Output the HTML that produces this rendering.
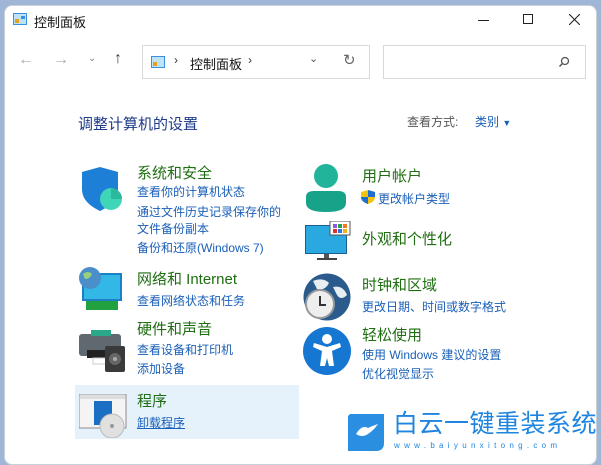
<!DOCTYPE html>
<html><head><meta charset="utf-8"><style>
*{margin:0;padding:0;box-sizing:border-box}
body{width:601px;height:457px;overflow:hidden;background:#9fb6d6;font-family:"Liberation Sans","Noto Sans CJK SC",sans-serif;position:relative}
.win{position:absolute;left:4px;top:5px;width:593px;height:460px;background:#fff;border-radius:8px;border:1px solid #c8d0da}
.a{position:absolute;white-space:nowrap}
.h{font-size:15px;color:#1f6e12}
.l{font-size:12px;color:#1a5fb8}
.box{position:absolute;border:1px solid #d9d9d9;background:#fff}
</style></head><body>
<div class="win"></div>
<!-- title -->
<svg class="a" style="left:13px;top:13px" width="14" height="12"><rect x="0" y="0" width="14" height="12" fill="#3b8ee0"/><rect x="1" y="1" width="12" height="10" fill="#bfe3f6"/><rect x="2" y="6" width="4" height="4" fill="#e6a020"/><rect x="8" y="3" width="4" height="3" fill="#3b8ee0"/></svg>
<div class="a" style="left:34px;top:12px;font-size:13px;color:#111">控制面板</div>
<div class="a" style="left:478px;top:20px;width:11px;height:1px;background:#222"></div>
<div class="a" style="left:523px;top:14px;width:10px;height:10px;border:1px solid #222"></div>
<svg class="a" style="left:569px;top:14px" width="11" height="11"><path d="M0 0L11 11M11 0L0 11" stroke="#222" stroke-width="1.1"/></svg>
<!-- nav -->
<div class="a" style="left:18px;top:51px;font-size:16px;color:#aaa">←</div>
<div class="a" style="left:53px;top:51px;font-size:16px;color:#aaa">→</div>
<div class="a" style="left:88px;top:53px;font-size:10px;color:#888">⌄</div>
<div class="a" style="left:114px;top:50px;font-size:16px;color:#444">↑</div>
<div class="box" style="left:142px;top:45px;width:228px;height:34px"></div>
<svg class="a" style="left:151px;top:56px" width="14" height="12"><rect width="14" height="12" fill="#3b8ee0"/><rect x="1" y="1" width="12" height="10" fill="#bfe3f6"/><rect x="2" y="6" width="4" height="4" fill="#e6a020"/></svg>
<div class="a" style="left:174px;top:53px;font-size:12px;color:#333">›</div>
<div class="a" style="left:190px;top:54px;font-size:13px;color:#111">控制面板</div>
<div class="a" style="left:248px;top:53px;font-size:12px;color:#333">›</div>
<div class="a" style="left:309px;top:52px;font-size:11px;color:#555">⌄</div>
<div class="a" style="left:343px;top:51px;font-size:15px;color:#666">↻</div>
<div class="box" style="left:383px;top:45px;width:203px;height:34px"></div>
<svg class="a" style="left:558px;top:56px" width="12" height="12"><circle cx="7" cy="5" r="3.5" fill="none" stroke="#555" stroke-width="1.3"/><line x1="4.5" y1="7.5" x2="1.5" y2="10.5" stroke="#555" stroke-width="1.5"/></svg>
<div class="a" style="left:78px;top:113px;font-size:15px;color:#1e3a8a">调整计算机的设置</div>
<div class="a" style="left:407px;top:113px;font-size:12px;color:#555">查看方式:</div>
<div class="a" style="left:475px;top:113px;font-size:12px;color:#1a5fb8">类别 <span style="font-size:9px">▼</span></div>
<!-- left column -->
<svg class="a" style="left:80px;top:167px" width="45" height="45"><path d="M2 5 L20 0 L38 5 L38 22 C38 34 28 40 20 44 C12 40 2 34 2 22Z" fill="#1e7fd6"/><circle cx="31" cy="32" r="11" fill="#3fd6b8"/><path d="M31 21 A11 11 0 0 1 42 32 L31 32Z" fill="#2bb99e"/></svg>
<div class="a h" style="left:137px;top:162px">系统和安全</div>
<div class="a l" style="left:137px;top:183px">查看你的计算机状态</div>
<div class="a l" style="left:137px;top:203px">通过文件历史记录保存你的</div>
<div class="a l" style="left:137px;top:220px">文件备份副本</div>
<div class="a l" style="left:137px;top:239px">备份和还原(Windows 7)</div>
<svg class="a" style="left:78px;top:267px" width="47" height="47"><rect x="4" y="6" width="40" height="28" fill="#1d7fc4"/><rect x="6" y="8" width="36" height="24" fill="#33b7e6"/><rect x="8" y="34" width="32" height="9" fill="#21a140"/><circle cx="12" cy="11" r="11" fill="#4a8fc9"/><path d="M5 7 Q10 3 14 7 Q12 12 7 12Z" fill="#9ad07c"/></svg>
<div class="a h" style="left:137px;top:268px">网络和 Internet</div>
<div class="a l" style="left:137px;top:292px">查看网络状态和任务</div>
<svg class="a" style="left:79px;top:330px" width="48" height="42"><rect x="0" y="4" width="42" height="22" rx="3" fill="#606870"/><rect x="12" y="0" width="20" height="6" fill="#2aa889"/><rect x="8" y="20" width="26" height="8" fill="#222"/><rect x="14" y="28" width="22" height="6" fill="#fff" stroke="#ccc"/><rect x="26" y="16" width="20" height="26" rx="2" fill="#3a3a3a"/><circle cx="36" cy="29" r="6" fill="#666"/><circle cx="36" cy="29" r="2" fill="#aaa"/></svg>
<div class="a h" style="left:137px;top:318px">硬件和声音</div>
<div class="a l" style="left:137px;top:341px">查看设备和打印机</div>
<div class="a l" style="left:137px;top:360px">添加设备</div>
<div class="a" style="left:75px;top:385px;width:224px;height:54px;background:#e5f1fb"></div>
<svg class="a" style="left:79px;top:394px" width="48" height="44"><rect x="0" y="0" width="47" height="34" fill="#f4f4f4" stroke="#8b8b8b"/><rect x="1" y="1" width="45" height="4" fill="#ddd"/><rect x="15" y="7" width="18" height="24" fill="#1a6fc4"/><circle cx="33" cy="32" r="12" fill="#e0e0e0" stroke="#bbb"/><circle cx="33" cy="32" r="2" fill="#999"/></svg>
<div class="a h" style="left:137px;top:390px">程序</div>
<div class="a l" style="left:137px;top:414px;text-decoration:underline">卸载程序</div>
<!-- right column -->
<svg class="a" style="left:306px;top:163px" width="42" height="50"><ellipse cx="20" cy="13" rx="12" ry="12" fill="#22b49a"/><path d="M0 34 Q0 28 8 28 L32 28 Q40 28 40 34 L40 40 Q40 49 20 49 Q0 49 0 40Z" fill="#17a389"/></svg>
<div class="a h" style="left:362px;top:165px">用户帐户</div>
<svg class="a" style="left:361px;top:190px" width="14" height="14"><path d="M7 0 L14 2 L14 7 C14 11 10 13 7 14 C4 13 0 11 0 7 L0 2Z" fill="#f4c20d"/><path d="M7 0 L14 2 L14 7 L7 7Z M0 7 L7 7 L7 14 C4 13 0 11 0 7Z" fill="#1c6fd1"/></svg>
<div class="a l" style="left:378px;top:190px">更改帐户类型</div>
<svg class="a" style="left:305px;top:221px" width="46" height="40"><rect x="0" y="4" width="42" height="29" fill="#1c5d93"/><rect x="1" y="5" width="40" height="27" fill="#2aa8e0"/><rect x="25" y="0" width="20" height="14" fill="#fff" stroke="#555"/><rect x="28" y="3" width="4" height="4" fill="#8a5be0"/><rect x="33" y="3" width="4" height="4" fill="#2aa040"/><rect x="38" y="3" width="4" height="4" fill="#f07a20"/><rect x="28" y="8" width="4" height="4" fill="#e03030"/><rect x="33" y="8" width="4" height="4" fill="#2a7ae0"/><rect x="38" y="8" width="4" height="4" fill="#f0b020"/><rect x="19" y="33" width="5" height="4" fill="#555"/><rect x="12" y="37" width="20" height="2" fill="#444"/></svg>
<div class="a h" style="left:362px;top:228px">外观和个性化</div>
<svg class="a" style="left:303px;top:273px" width="48" height="48"><circle cx="24" cy="24" r="23.5" fill="#2a5b8c"/><path d="M10 8 Q20 4 26 10 Q22 18 14 16Z M30 14 Q40 12 44 22 Q38 28 34 22Z" fill="#e6eef2"/><circle cx="17" cy="31" r="14" fill="#eee" stroke="#999" stroke-width="2"/><path d="M17 23 L17 32 L23 32" fill="none" stroke="#333" stroke-width="2"/></svg>
<div class="a h" style="left:362px;top:274px">时钟和区域</div>
<div class="a l" style="left:362px;top:298px">更改日期、时间或数字格式</div>
<svg class="a" style="left:303px;top:327px" width="48" height="48"><circle cx="24" cy="24" r="24" fill="#1677d2"/><circle cx="24" cy="12" r="5" fill="#fff"/><path d="M11 16 L24 20 L37 16 L38 20 L29 24 L31 39 L26 39 L24 31 L22 39 L17 39 L19 24 L10 20Z" fill="#fff"/></svg>
<div class="a h" style="left:362px;top:324px">轻松使用</div>
<div class="a l" style="left:362px;top:346px">使用 Windows 建议的设置</div>
<div class="a l" style="left:362px;top:365px">优化视觉显示</div>
<!-- watermark -->
<svg class="a" style="left:348px;top:414px" width="38" height="37"><path d="M2 0 L36 0 L36 29 Q36 37 28 37 L0 37 L0 2Z" fill="#2a8fe0"/><path d="M8 20 Q14 24 20 20 Q26 16 30 10 Q24 12 20 14 Q14 10 8 20Z" fill="#fff"/></svg>
<div class="a" style="left:393px;top:409px;font-size:25px;color:#1e85e0;letter-spacing:0.5px;line-height:30px">白云一键重装系统</div>
<div class="a" style="left:394px;top:441px;font-size:8px;color:#1e85e0;letter-spacing:4.3px">www.baiyunxitong.com</div>
</body></html>
